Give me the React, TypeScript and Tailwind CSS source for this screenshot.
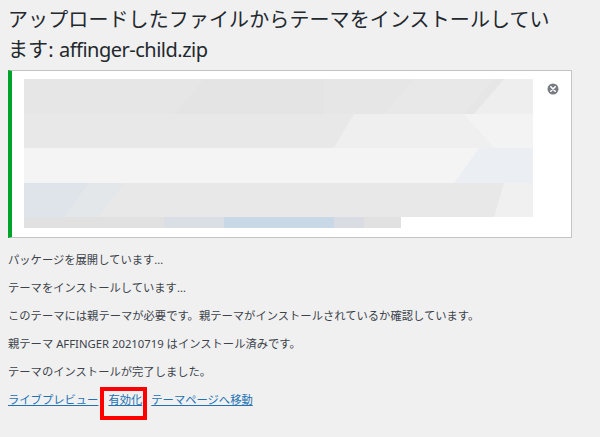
const jp = "font-['Noto_Sans','Noto_Sans_CJK_JP',sans-serif]";

// blurred screenshot inside the notice
const BlurredShot = () => (
  <svg width="509" height="149" viewBox="0 0 509 149" className="block">
    <rect x="0" y="0" width="509" height="35" fill="#e6e6e6" />
    <polygon points="180,0 300,0 300,35 150,35" fill="#e4e4e4" />
    <polygon points="390,0 470,0 440,35 360,35" fill="#e8e8e8" />
    <polygon points="480,0 509,0 509,35 450,35" fill="#eeeeee" />
    <rect x="0" y="35" width="509" height="34" fill="#e8e8e8" />
    <polygon points="330,35 509,35 509,69 310,69" fill="#efefef" />
    <polygon points="440,35 509,35 509,69 470,69" fill="#f3f3f3" />
    <rect x="0" y="69" width="509" height="35" fill="#f4f4f4" />
    <polygon points="455,69 509,69 509,104 430,104" fill="#ebeef2" />
    <rect x="0" y="104" width="509" height="34" fill="#e8e8e8" />
    <polygon points="0,104 65,104 40,138 0,138" fill="#dfe4ea" />
    <polygon points="65,104 100,104 75,138 40,138" fill="#e4e7ea" />
    <polygon points="480,104 509,104 509,138 470,138" fill="#f0f0f0" />
    <rect x="0" y="138" width="377" height="11" fill="#e1e1e1" />
    <rect x="140" y="138" width="60" height="11" fill="#dadfe5" />
    <rect x="200" y="138" width="110" height="11" fill="#c9d8e6" />
    <rect x="310" y="138" width="30" height="11" fill="#d9dde3" />
  </svg>
);

const CloseIcon = () => (
  <svg width="12" height="12" viewBox="0 0 12 12">
    <circle cx="6" cy="6" r="5.5" fill="#787c82" />
    <path d="M3.8 3.8 L8.2 8.2 M8.2 3.8 L3.8 8.2" stroke="#fff" strokeWidth="1.6" strokeLinecap="round" />
  </svg>
);

const lines = [
  "パッケージを展開しています…",
  "テーマをインストールしています…",
  "このテーマには親テーマが必要です。親テーマがインストールされているか確認しています。",
  "親テーマ AFFINGER 20210719 はインストール済みです。",
  "テーマのインストールが完了しました。",
];

export default function App() {
  return (
    <div className={`w-[600px] h-[437px] overflow-hidden bg-[#f0f0f1] px-[8px] ${jp}`}>
      <h1 className="pt-[5px] text-[20px] leading-[30px] font-normal text-[#23282d] tracking-[0.1px]">
        アップロードしたファイルからテーマをインストールしてい
        <br />
        ます: <span className="tracking-[-0.5px]">affinger-child.zip</span>
      </h1>

      <div className="relative mt-[5px] w-[564px] h-[168px] bg-white border border-[#c3c4c7] border-l-4 border-l-[#00a32a] pl-[12px] pt-[8px]">
        <BlurredShot />
        <button className="absolute top-[12px] right-[12px]">
          <CloseIcon />
        </button>
      </div>

      <div className="mt-[8px] flex flex-col text-[11.3px] text-[#3c434a]">
        {lines.map((t) => (
          <p key={t} className="h-[28px] leading-[28px]">
            {t}
          </p>
        ))}
        <p className="h-[28px] leading-[28px] flex text-[#2271b1]">
          <a href="#" className="underline">ライブプレビュー</a>
          <span className="relative ml-[10px]">
            <a href="#" className="underline">有効化</a>
            <span className="absolute -left-[8px] -right-[5px] top-[1px] h-[33px] border-4 border-[#ff0000]" />
          </span>
          <a href="#" className="underline ml-[9px]">テーマページへ移動</a>
        </p>
      </div>
    </div>
  );
}
